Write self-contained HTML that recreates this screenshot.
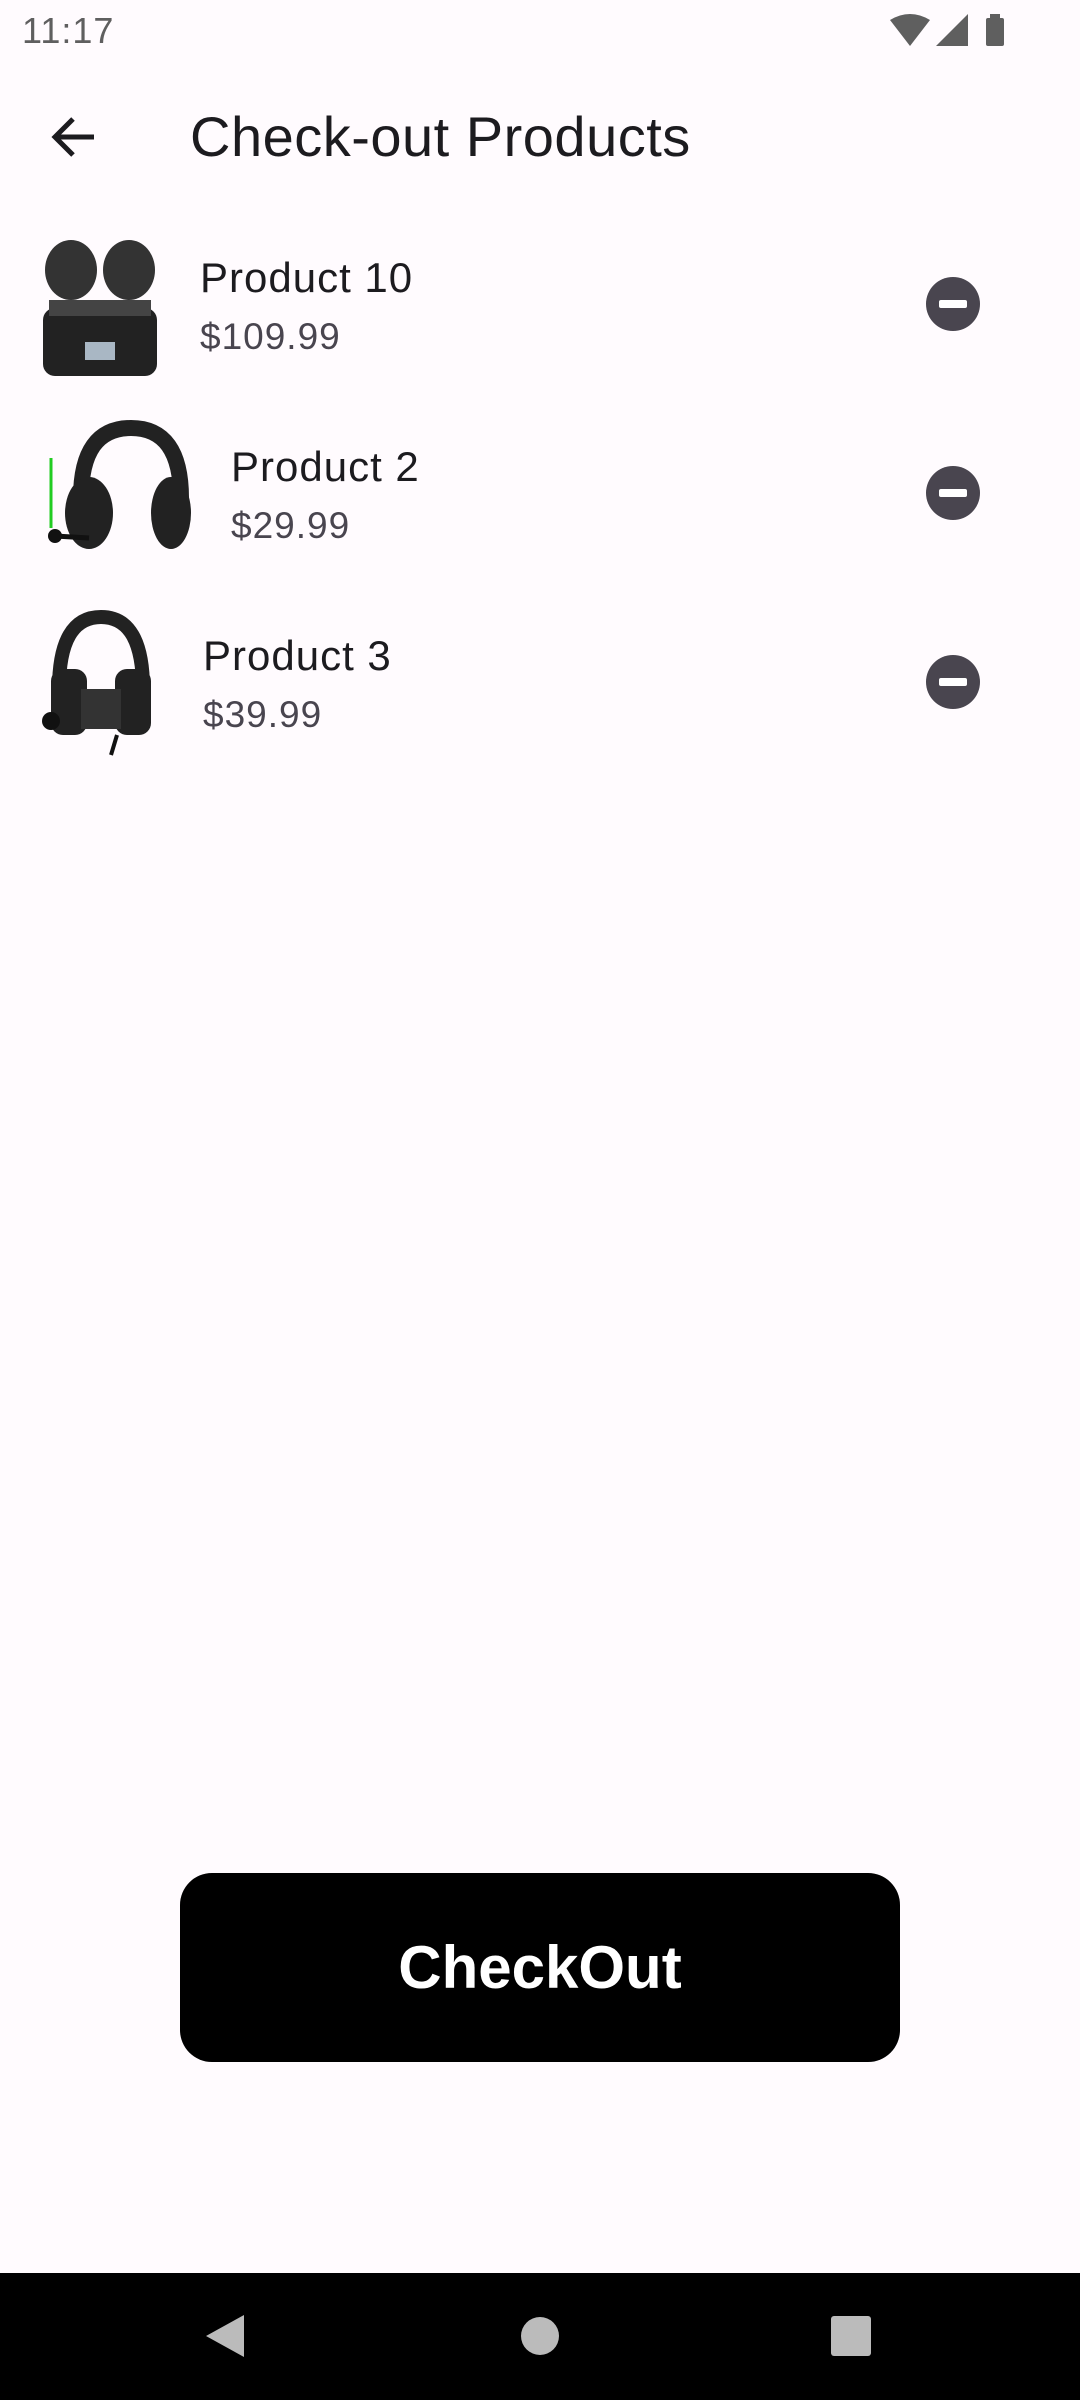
<!DOCTYPE html>
<html><head><meta charset="utf-8"><style>
*{margin:0;padding:0;box-sizing:border-box}
body{width:1080px;height:2400px;background:#fffbfe;font-family:"Liberation Sans",Roboto,sans-serif;position:relative;overflow:hidden;color:#1c1b1f}
.abs{position:absolute}
.name{font-size:42px;letter-spacing:1px;color:#1c1b1f}
.price{font-size:37px;letter-spacing:1px;color:#49454f}
.minus{width:54px;height:54px;border-radius:50%;background:#49454f}
.minus:after{content:"";position:absolute;left:13px;top:23px;width:28px;height:8px;background:#fff;border-radius:2px}
</style></head><body>
<div class="abs" style="left:22px;top:10px;font-size:36px;letter-spacing:1px;color:#5f5f5f">11:17</div>
<svg class="abs" style="left:888px;top:12px" width="124" height="36" viewBox="0 0 124 36">
<path d="M2 8 Q22 -4 42 8 L22 34 Z" fill="#5f5f5f"/>
<path d="M80 2 L80 34 L48 34 Z" fill="#5f5f5f"/>
<rect x="98" y="6" width="18" height="28" rx="2" fill="#5f5f5f"/><rect x="102" y="2" width="10" height="5" fill="#5f5f5f"/>
</svg>
<svg class="abs" style="left:50px;top:114px" width="48" height="46" viewBox="0 0 48 46"><path d="M44 23 H6 M23 5 L5 23 L23 41" stroke="#1c1b1f" stroke-width="5" fill="none"/></svg>
<div class="abs" style="left:190px;top:104px;font-size:56px;letter-spacing:0.5px">Check-out Products</div>

<svg class="abs" style="left:41px;top:230px" width="118" height="148" viewBox="0 0 118 148">
<rect x="2" y="78" width="114" height="68" rx="12" fill="#222"/>
<rect x="44" y="112" width="30" height="18" fill="#cde" opacity=".8"/>
<ellipse cx="30" cy="40" rx="26" ry="30" fill="#333"/><ellipse cx="88" cy="40" rx="26" ry="30" fill="#333"/>
<rect x="8" y="70" width="102" height="16" fill="#444"/></svg>
<div class="abs name" style="left:200px;top:254px">Product 10</div>
<div class="abs price" style="left:200px;top:316px">$109.99</div>
<div class="abs minus" style="left:926px;top:277px"></div>

<svg class="abs" style="left:41px;top:418px" width="150" height="148" viewBox="0 0 150 148">
<path d="M40 80 Q40 10 90 10 Q140 10 140 80" stroke="#222" stroke-width="16" fill="none"/>
<ellipse cx="48" cy="95" rx="24" ry="36" fill="#222"/><ellipse cx="130" cy="95" rx="20" ry="36" fill="#222"/>
<path d="M48 120 L14 118" stroke="#111" stroke-width="5"/><circle cx="14" cy="118" r="7" fill="#111"/>
<path d="M10 40 V110" stroke="#2c2" stroke-width="3"/></svg>
<div class="abs name" style="left:231px;top:443px">Product 2</div>
<div class="abs price" style="left:231px;top:505px">$29.99</div>
<div class="abs minus" style="left:926px;top:466px"></div>

<svg class="abs" style="left:41px;top:609px" width="118" height="148" viewBox="0 0 118 148">
<path d="M18 80 Q18 8 60 8 Q102 8 102 80" stroke="#222" stroke-width="14" fill="none"/>
<rect x="10" y="60" width="36" height="66" rx="12" fill="#222"/><rect x="74" y="60" width="36" height="66" rx="12" fill="#222"/>
<rect x="40" y="80" width="40" height="40" fill="#333"/>
<circle cx="10" cy="112" r="9" fill="#111"/><path d="M76 126 L70 146" stroke="#111" stroke-width="4"/></svg>
<div class="abs name" style="left:203px;top:632px">Product 3</div>
<div class="abs price" style="left:203px;top:694px">$39.99</div>
<div class="abs minus" style="left:926px;top:655px"></div>

<div class="abs" style="left:180px;top:1873px;width:720px;height:189px;background:#000;border-radius:32px;color:#fff;font-weight:bold;font-size:60px;display:flex;align-items:center;justify-content:center">CheckOut</div>

<div class="abs" style="left:0;top:2273px;width:1080px;height:127px;background:#000"></div>
<svg class="abs" style="left:0;top:2273px" width="1080" height="127" viewBox="0 0 1080 127">
<path d="M244 42 L244 84 L206 63 Z" fill="#bbb"/>
<circle cx="540" cy="63" r="19" fill="#bbb"/>
<rect x="831" y="43" width="40" height="40" rx="3" fill="#bbb"/></svg>
</body></html>
